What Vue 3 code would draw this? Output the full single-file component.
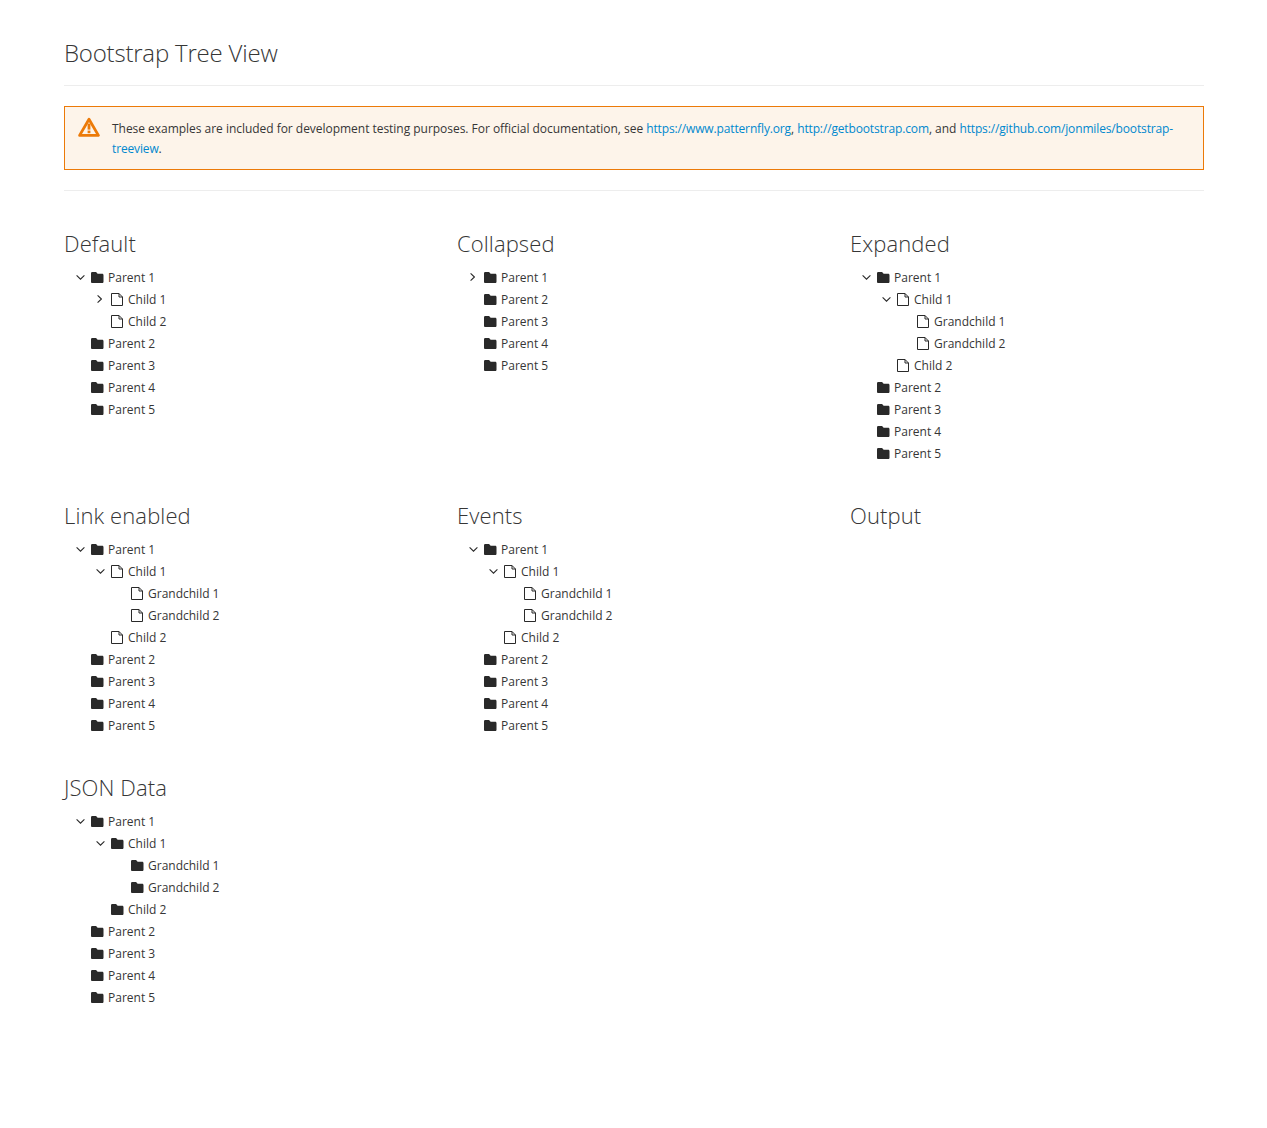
<script setup>
import { computed } from 'vue'

// tree helpers
const grand = (icon) => [
  { label: 'Grandchild 1', icon },
  { label: 'Grandchild 2', icon }
]

const parents = (first) => [
  first,
  { label: 'Parent 2', icon: 'folder' },
  { label: 'Parent 3', icon: 'folder' },
  { label: 'Parent 4', icon: 'folder' },
  { label: 'Parent 5', icon: 'folder' }
]

const expanded = (childIcon) =>
  parents({
    label: 'Parent 1',
    icon: 'folder',
    open: true,
    children: [
      { label: 'Child 1', icon: childIcon, open: true, children: grand(childIcon) },
      { label: 'Child 2', icon: childIcon }
    ]
  })

function flatten(nodes, level = 0) {
  const out = []
  for (const n of nodes) {
    out.push({ ...n, level })
    if (n.open && n.children) out.push(...flatten(n.children, level + 1))
  }
  return out
}

const sections = computed(() => [
  {
    title: 'Default',
    rows: flatten(
      parents({
        label: 'Parent 1',
        icon: 'folder',
        open: true,
        children: [
          { label: 'Child 1', icon: 'file', closed: true },
          { label: 'Child 2', icon: 'file' }
        ]
      })
    )
  },
  { title: 'Collapsed', rows: flatten(parents({ label: 'Parent 1', icon: 'folder', closed: true })) },
  { title: 'Expanded', rows: flatten(expanded('file')) },
  { title: 'Link enabled', rows: flatten(expanded('file')) },
  { title: 'Events', rows: flatten(expanded('file')) },
  { title: 'Output', rows: [] },
  { title: 'JSON Data', rows: flatten(expanded('folder')) }
])
</script>

<template>
  <div class="page">
    <h1 class="title">Bootstrap Tree View</h1>
    <hr class="rule" />
    <div class="alert">
      <svg class="alert-icon" viewBox="0 0 22 20">
        <path class="tri" d="M11 2.2 L20.4 18.4 H1.6 Z" />
        <rect x="9.6" y="6.6" width="2.8" height="6" fill="#ec7a08" />
        <rect x="9.6" y="13.6" width="2.8" height="2.6" fill="#ec7a08" />
      </svg>
      <p class="alert-text">
        These examples are included for development testing purposes. For official documentation, see
        <a>https://www.patternfly.org</a>, <a>http://getbootstrap.com</a>, and
        <a>https://github.com/jonmiles/bootstrap-treeview</a>.
      </p>
    </div>
    <hr class="rule" />

    <div class="grid">
      <section v-for="s in sections" :key="s.title" class="block">
        <h2 class="heading">{{ s.title }}</h2>
        <ul class="tree">
          <li
            v-for="(r, i) in s.rows"
            :key="i"
            class="row"
            :style="{ paddingLeft: r.level * 20 + 'px' }"
          >
            <span class="toggle">
              <svg v-if="r.open" class="chev" viewBox="0 0 9 5">
                <path d="M.6.4 4.5 4.2 8.4.4" />
              </svg>
              <svg v-else-if="r.closed" class="chev-r" viewBox="0 0 5 8">
                <path d="M.6.4 4.4 4 .6 7.6" />
              </svg>
            </span>
            <svg v-if="r.icon === 'folder'" class="ico" viewBox="0 64 512 384" preserveAspectRatio="none">
              <path d="M464 128H272l-64-64H48C21.49 64 0 85.49 0 112v288c0 26.51 21.49 48 48 48h416c26.51 0 48-21.49 48-48V176c0-26.51-21.49-48-48-48z" />
            </svg>
            <svg v-else class="ico file" viewBox="0 0 12 13">
              <path d="M.5.5H8L11.5 4v8.5H.5zM8 .5V4h3.5" />
            </svg>
            <span class="label">{{ r.label }}</span>
          </li>
        </ul>
      </section>
    </div>
  </div>
</template>

<style>
html, body {
  background: #fff;
}
</style>

<style scoped>
.page {
  padding: 31px 63px 120px 64px;
  font-family: "Open Sans", "Liberation Sans", sans-serif;
  font-size: 12px;
  color: #363636;
}
.title {
  margin: 0;
  font-size: 24px;
  font-weight: 300;
  letter-spacing: -0.2px;
  line-height: 43px;
  height: 44px;
}
.rule {
  margin: 10px 0 20px;
  border: 0;
  border-top: 1px solid #ededed;
}
.alert {
  display: flex;
  gap: 12px;
  padding: 11px 13px 10px;
  background: #fdf4ea;
  border: 1px solid #ec7a08;
}
.alert + .rule {
  margin: 20px 0 0;
}
.alert-icon {
  width: 22px;
  height: 20px;
  flex: none;
  margin-top: -1px;
}
.tri {
  fill: none;
  stroke: #ec7a08;
  stroke-width: 2.8;
  stroke-linejoin: round;
}
.alert-text {
  margin: 0;
  padding-top: 1px;
  line-height: 20px;
  letter-spacing: -0.03px;
}
.alert-text a {
  color: #0088ce;
  letter-spacing: -0.14px;
}
.grid {
  display: grid;
  grid-template-columns: repeat(3, 354px);
  column-gap: 39px;
  margin-top: 34px;
}
.block {
  height: 272px;
}
.heading {
  margin: 0 0 5px;
  font-size: 22px;
  font-weight: 300;
  letter-spacing: 0.1px;
  line-height: 36px;
}
.tree {
  list-style: none;
  margin: 0;
  padding: 0;
}
.row {
  display: flex;
  align-items: center;
  height: 22px;
}
.toggle {
  width: 27px;
  padding-right: 6px;
  box-sizing: border-box;
  display: flex;
  justify-content: flex-end;
  flex: none;
}
.chev {
  width: 9px;
  height: 5px;
}
.chev-r {
  width: 5px;
  height: 8px;
  margin-right: 3px;
}
.chev path,
.chev-r path {
  fill: none;
  stroke: #292929;
  stroke-width: 1.1;
}
.ico {
  width: 12.5px;
  height: 11px;
  flex: none;
  fill: #292929;
}
.ico.file {
  width: 12px;
  height: 13px;
  margin-right: .5px;
  fill: none;
  stroke: #292929;
  stroke-width: 1;
}
.label {
  margin-left: 4.5px;
}
</style>
